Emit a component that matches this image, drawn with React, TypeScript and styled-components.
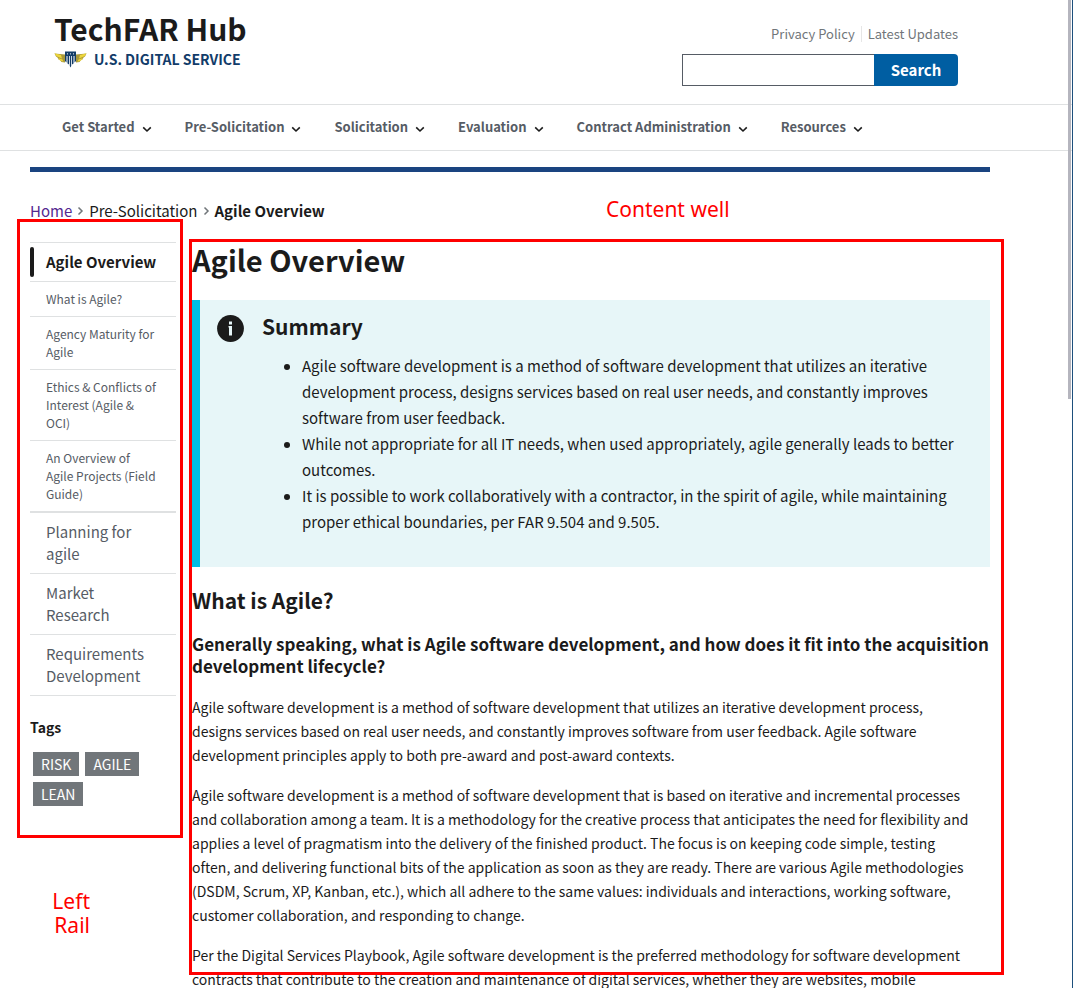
import React from "react";
import styled, { createGlobalStyle } from "styled-components";

const GlobalStyle = createGlobalStyle`
  *, *::before, *::after { box-sizing: border-box; }
  body {
    margin: 0;
    background: #ffffff;
    color: #1b1b1b;
    font-family: "Noto Sans CJK SC", "Noto Sans", sans-serif;
    font-size: 15px;
    line-height: 24px;
  }
  h1, h2, h3, h4, p, ul, ol { margin: 0; padding: 0; }
  a { color: inherit; text-decoration: none; }
`;

const Frame = styled.div`
  position: relative;
  height: 100vh;
  border-right: 1px solid #1d4f7c;
`;

const Scroller = styled.div`
  height: 100%;
  overflow-x: hidden;
  overflow-y: auto;
  scrollbar-width: none;
`;

const ScrollThumb = styled.div`
  position: absolute;
  top: 0;
  right: 1px;
  width: 3px;
  height: 399px;
  background: #b5b5be;
`;

const Header = styled.header`
  border-bottom: 1px solid #dfe1e2;
`;

const HeaderTop = styled.div`
  display: flex;
  justify-content: space-between;
  align-items: flex-start;
  max-width: 958px;
  height: 104px;
  padding: 10px 0 0 54px;
`;

const SiteTitle = styled.div`
  font-size: 30px;
  line-height: 36px;
  font-weight: 700;
`;

const Agency = styled.a`
  display: flex;
  align-items: center;
  gap: 7px;
  margin-top: 1px;
  font-size: 14px;
  line-height: 24px;
  font-weight: 700;
  color: #123c69;
`;

const HeaderTools = styled.div`
  display: flex;
  flex-direction: column;
  align-items: flex-end;
  gap: 8px;
  padding-top: 12px;
`;

const UtilityLinks = styled.nav`
  display: flex;
  align-items: center;
  height: 24px;
  font-size: 13px;
  line-height: 16px;
  color: #71767a;
  a + a {
    margin-left: 6px;
    padding-left: 6px;
    border-left: 1px solid #e6e6e6;
  }
`;

const SearchForm = styled.form`
  display: flex;
  height: 32px;
`;

const SearchInput = styled.input`
  width: 192px;
  border: 1px solid #565c65;
  border-right: 0;
  border-radius: 0;
  padding: 0 8px;
  font: inherit;
`;

const SearchButton = styled.button`
  width: 84px;
  border: 0;
  border-radius: 0 4px 4px 0;
  background: #005ea2;
  color: #ffffff;
  font-family: inherit;
  font-size: 15px;
  font-weight: 700;
  line-height: 30px;
  padding: 0;
`;

const PrimaryNav = styled.nav`
  border-top: 1px solid #dfe1e2;
  height: 46px;
  padding: 0 0 2px 62px;
  display: flex;
  align-items: center;
  gap: 33px;
`;

const NavButton = styled.button`
  display: flex;
  align-items: center;
  gap: 7px;
  border: 0;
  padding: 0;
  background: none;
  color: #565c65;
  font-family: inherit;
  font-size: 13px;
  line-height: 20px;
  font-weight: 700;
  white-space: nowrap;
  svg { margin-top: 5px; }
`;

const Page = styled.div`
  max-width: 990px;
  padding-left: 30px;
`;

const Rule = styled.div`
  margin-top: 16px;
  height: 5px;
  background: #1a4480;
`;

const Breadcrumb = styled.ol`
  display: flex;
  align-items: center;
  gap: 5px;
  margin-top: 27px;
  list-style: none;
  line-height: 24px;
  li { display: flex; align-items: center; gap: 5px; }
  a { color: #54278f; }
  strong { font-weight: 700; }
`;

const Columns = styled.div`
  display: flex;
  align-items: flex-start;
  gap: 16px;
  margin-top: 19px;
`;

const Rail = styled.aside`
  position: relative;
  flex: 0 0 146px;
`;

const Outline = styled.div<{ $area: "rail" | "well" }>`
  position: absolute;
  border: 3px solid #ff0000;
  pointer-events: none;
  ${(p) =>
    p.$area === "rail"
      ? "top: -23px; left: -13px; right: -7px; bottom: -32px;"
      : "top: -3px; left: -3px; right: -14px; height: 736px;"}
`;

const Note = styled.div<{ $area: "rail" | "well" }>`
  position: absolute;
  color: #ff0000;
  font-family: "Noto Sans", sans-serif;
  font-size: 21px;
  line-height: 24px;
  text-align: right;
  ${(p) =>
    p.$area === "rail"
      ? "top: 100%; left: 20px; width: 40px; margin-top: 83px;"
      : "top: -45px; left: 414px;"}
`;

const SideList = styled.ul`
  list-style: none;
  border-bottom: 1px solid #dfe1e2;
`;

const SideItem = styled.li`
  border-top: 1px solid #dfe1e2;
`;

const SubList = styled.ul`
  list-style: none;
  border-bottom: 1px solid #dfe1e2;
`;

const SideLink = styled.a<{ $small?: boolean }>`
  display: block;
  padding: 8px 19px 8px 16px;
  color: #565c65;
  font-size: ${(p) => (p.$small ? "12px" : "15px")};
  line-height: ${(p) => (p.$small ? "18px" : "22px")};
`;

const CurrentLink = styled(SideLink)`
  position: relative;
  color: #1b1b1b;
  font-weight: 700;
  white-space: nowrap;
  &::before {
    content: "";
    position: absolute;
    left: 0;
    top: 4px;
    bottom: 4px;
    width: 4px;
    border-radius: 2px;
    background: #1b1b1b;
  }
`;

const TagsTitle = styled.h4`
  margin-top: 19px;
  font-size: 14px;
  line-height: 24px;
`;

const TagList = styled.div`
  display: flex;
  flex-wrap: wrap;
  gap: 6px;
  padding: 13px 3px 0;
`;

const Tag = styled.a`
  background: #71767a;
  color: #ffffff;
  padding: 0 8px;
  font-size: 14px;
  line-height: 24px;
`;

const Well = styled.main`
  position: relative;
  flex: 1 1 0;
  min-width: 0;
`;

const PageTitle = styled.h1`
  font-size: 29px;
  line-height: 34px;
`;

const Summary = styled.section`
  display: flex;
  gap: 17px;
  margin-top: 24px;
  padding: 11px 16px 32px;
  border-left: 8px solid #00bde3;
  background: #e7f6f8;
  svg { flex: none; margin-top: 3px; }
`;

const SummaryTitle = styled.h3`
  font-size: 21px;
  line-height: 30px;
`;

const SummaryList = styled.ul`
  margin-top: 12px;
  padding-left: 40px;
  line-height: 26px;
`;

const SectionTitle = styled.h2`
  margin-top: 19px;
  font-size: 21px;
  line-height: 28px;
`;

const Question = styled.h3`
  margin-top: 19px;
  font-size: 17px;
  line-height: 22px;
`;

const Prose = styled.div`
  margin-top: 18px;
  padding-right: 18px;
  font-size: 14px;
  line-height: 24px;
  p + p { margin-top: 16px; }
`;

const Chevron = () => (
  <svg width="10" height="7" viewBox="0 0 10 7" fill="none" stroke="#1b1b1b" strokeWidth="1.6">
    <path d="M1.2 1.4 5 5 8.8 1.4" />
  </svg>
);

const Separator = () => (
  <svg width="7" height="10" viewBox="0 0 7 10" fill="none" stroke="#71767a" strokeWidth="1.5">
    <path d="M1.5 1.5 5 5 1.5 8.5" />
  </svg>
);

const Emblem = () => (
  <svg width="33" height="18" viewBox="0 0 33 18">
    <path d="M0.500 3.500 11 4.500V12.500L7.500 12 6 10 4.500 9.500 3.500 7.500 2 6.500Z" fill="#a8983a" />
    <path d="M32.500 3.500 22 4.500V12.500L25.500 12 27 10 28.500 9.500 29.500 7.500 31 6.500Z" fill="#a8983a" />
    <path d="M0.500 3.300 7 5 8 8.500 2.500 6.300ZM4 8 8.500 9.500 9.500 11.800 6 10.500Z" fill="#ecd53a" />
    <path d="M32.500 3.300 26 5 25 8.500 30.500 6.300ZM29 8 24.500 9.500 23.500 11.800 27 10.500Z" fill="#ecd53a" />
    <path d="M11 1.500H22V11C21 14 18 14.500 16.500 17.500 15 14.500 12 14 11 11Z" fill="#ffffff" />
    <path d="M11 1.500H22V6H11ZM11 6H12.500V12.500L11 11ZM13.500 6H15V14.500L13.500 13.500ZM15.800 6H17.200V16L16.500 17.500 15.800 16ZM18 6H19.500V13.500L18 14.500ZM20.500 6H22V11L20.500 12.500Z" fill="#123c69" />
    <circle cx="13.500" cy="3.800" r="0.600" fill="#ffffff" />
    <circle cx="16.500" cy="3.800" r="0.600" fill="#ffffff" />
    <circle cx="19.500" cy="3.800" r="0.600" fill="#ffffff" />
  </svg>
);

const InfoIcon = () => (
  <svg width="29" height="29" viewBox="0 0 29 29">
    <circle cx="14.500" cy="14.500" r="13.400" fill="#1b1b1b" />
    <path d="M13 7.500h3v3h-3zM12.500 12h3.500v9.500h-3v-8h-0.500z" fill="#e7f6f8" />
  </svg>
);

const navItems = [
  "Get Started",
  "Pre-Solicitation",
  "Solicitation",
  "Evaluation",
  "Contract Administration",
  "Resources",
];

const subPages = [
  "What is Agile?",
  "Agency Maturity for Agile",
  "Ethics & Conflicts of Interest (Agile & OCI)",
  "An Overview of Agile Projects (Field Guide)",
];

const siblingPages = ["Planning for agile", "Market Research", "Requirements Development"];

const tags = ["RISK", "AGILE", "LEAN"];

export default function App() {
  return (
    <>
      <GlobalStyle />
      <Frame>
        <Scroller>
          <Header>
            <HeaderTop>
              <div>
                <SiteTitle>TechFAR Hub</SiteTitle>
                <Agency href="#usds">
                  <Emblem />
                  U.S. DIGITAL SERVICE
                </Agency>
              </div>
              <HeaderTools>
                <UtilityLinks aria-label="Utility">
                  <a href="#privacy">Privacy Policy</a>
                  <a href="#updates">Latest Updates</a>
                </UtilityLinks>
                <SearchForm role="search" onSubmit={(e) => e.preventDefault()}>
                  <SearchInput type="search" aria-label="Search" />
                  <SearchButton type="submit">Search</SearchButton>
                </SearchForm>
              </HeaderTools>
            </HeaderTop>
            <PrimaryNav aria-label="Primary">
              {navItems.map((item) => (
                <NavButton key={item} type="button">
                  {item}
                  <Chevron />
                </NavButton>
              ))}
            </PrimaryNav>
          </Header>

          <Page>
            <Rule />
            <Breadcrumb>
              <li>
                <a href="#home">Home</a>
                <Separator />
              </li>
              <li>
                Pre-Solicitation
                <Separator />
              </li>
              <li>
                <strong>Agile Overview</strong>
              </li>
            </Breadcrumb>

            <Columns>
              <Rail>
                <SideList>
                  <SideItem>
                    <CurrentLink href="#agile-overview">Agile Overview</CurrentLink>
                    <SubList>
                      {subPages.map((page) => (
                        <SideItem key={page}>
                          <SideLink $small href="#section">
                            {page}
                          </SideLink>
                        </SideItem>
                      ))}
                    </SubList>
                  </SideItem>
                  {siblingPages.map((page) => (
                    <SideItem key={page}>
                      <SideLink href="#page">{page}</SideLink>
                    </SideItem>
                  ))}
                </SideList>
                <TagsTitle>Tags</TagsTitle>
                <TagList>
                  {tags.map((tag) => (
                    <Tag key={tag} href="#tag">
                      {tag}
                    </Tag>
                  ))}
                </TagList>
                <Outline $area="rail" />
                <Note $area="rail">Left Rail</Note>
              </Rail>

              <Well>
                <PageTitle>Agile Overview</PageTitle>
                <Summary>
                  <InfoIcon />
                  <div>
                    <SummaryTitle>Summary</SummaryTitle>
                    <SummaryList>
                      <li>
                        Agile software development is a method of software development that utilizes
                        an iterative development process, designs services based on real user needs,
                        and constantly improves software from user feedback.
                      </li>
                      <li>
                        While not appropriate for all IT needs, when used appropriately, agile
                        generally leads to better outcomes.
                      </li>
                      <li>
                        It is possible to work collaboratively with a contractor, in the spirit of
                        agile, while maintaining proper ethical boundaries, per FAR 9.504 and 9.505.
                      </li>
                    </SummaryList>
                  </div>
                </Summary>
                <SectionTitle>What is Agile?</SectionTitle>
                <Question>
                  Generally speaking, what is Agile software development, and how does it fit into
                  the acquisition development lifecycle?
                </Question>
                <Prose>
                  <p>
                    Agile software development is a method of software development that utilizes an
                    iterative development process, designs services based on real user needs, and
                    constantly improves software from user feedback. Agile software development
                    principles apply to both pre-award and post-award contexts.
                  </p>
                  <p>
                    Agile software development is a method of software development that is based on
                    iterative and incremental processes and collaboration among a team. It is a
                    methodology for the creative process that anticipates the need for flexibility
                    and applies a level of pragmatism into the delivery of the finished product. The
                    focus is on keeping code simple, testing often, and delivering functional bits of
                    the application as soon as they are ready. There are various Agile methodologies
                    (DSDM, Scrum, XP, Kanban, etc.), which all adhere to the same values: individuals
                    and interactions, working software, customer collaboration, and responding to
                    change.
                  </p>
                  <p>
                    Per the Digital Services Playbook, Agile software development is the preferred
                    methodology for software development contracts that contribute to the creation
                    and maintenance of digital services, whether they are websites, mobile
                  </p>
                </Prose>
                <Outline $area="well" />
                <Note $area="well">Content well</Note>
              </Well>
            </Columns>
          </Page>
        </Scroller>
        <ScrollThumb />
      </Frame>
    </>
  );
}
